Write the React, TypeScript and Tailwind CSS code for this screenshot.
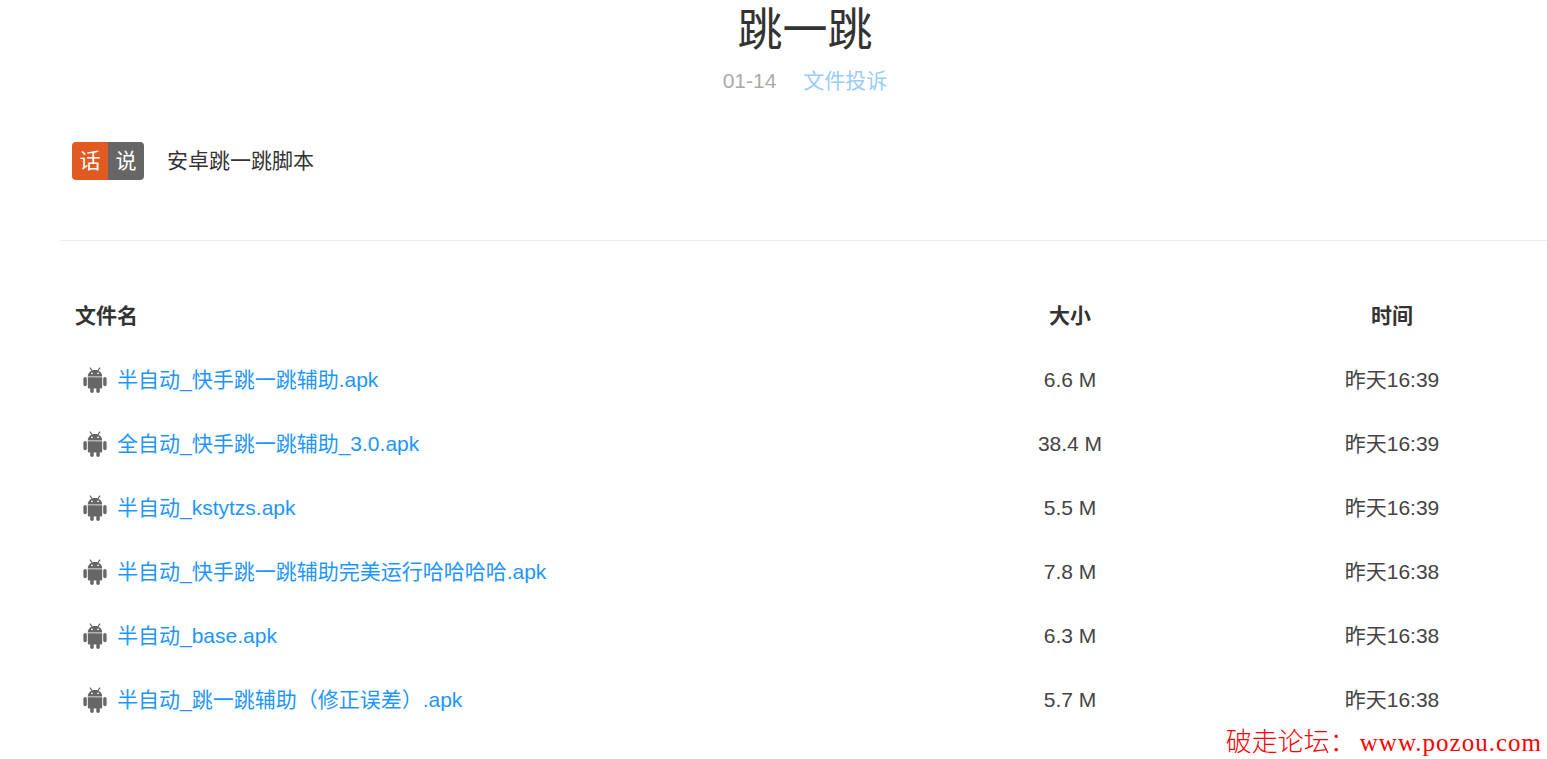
const files = [
  { name: "半自动_快手跳一跳辅助.apk", size: "6.6 M", time: "昨天16:39" },
  { name: "全自动_快手跳一跳辅助_3.0.apk", size: "38.4 M", time: "昨天16:39" },
  { name: "半自动_kstytzs.apk", size: "5.5 M", time: "昨天16:39" },
  { name: "半自动_快手跳一跳辅助完美运行哈哈哈哈.apk", size: "7.8 M", time: "昨天16:38" },
  { name: "半自动_base.apk", size: "6.3 M", time: "昨天16:38" },
  { name: "半自动_跳一跳辅助（修正误差）.apk", size: "5.7 M", time: "昨天16:38" },
];

function AndroidIcon() {
  return (
    <svg viewBox="0 0 24 26" className="h-[26px] w-[24px] shrink-0 fill-[#666666]">
      <path d="M7 .6l2.2 3.2M17 .6l-2.2 3.2" stroke="#666666" strokeWidth="1.2" fill="none" />
      <path d="M4.8 9.4C4.8 5.5 8 3 12 3s7.2 2.5 7.2 6.4z" />
      <circle cx="9" cy="6.4" r=".8" fill="#ffffff" />
      <circle cx="15" cy="6.4" r=".8" fill="#ffffff" />
      <path d="M4.8 10.2h14.4v10a1.3 1.3 0 0 1-1.3 1.3H6.1a1.3 1.3 0 0 1-1.3-1.3z" />
      <rect x="0.4" y="10" width="3.4" height="9.2" rx="1.7" />
      <rect x="20.2" y="10" width="3.4" height="9.2" rx="1.7" />
      <rect x="7.2" y="20" width="3.5" height="6" rx="1.7" />
      <rect x="13.3" y="20" width="3.5" height="6" rx="1.7" />
    </svg>
  );
}

export default function App() {
  return (
    <div className="relative h-[759px] overflow-hidden bg-white pl-[60px] font-['Liberation_Sans','Noto_Sans_CJK_SC',sans-serif] text-[21px] text-[#444]">
      <header className="flex flex-col items-center pl-[3px]">
        <h1 className="mt-[1px] h-[60px] text-[45px] leading-[60px] font-normal text-[#333]">跳一跳</h1>
        <div className="mt-[5px] flex h-[30px] items-center gap-[27px] leading-[30px]">
          <span className="text-[#aaa]">01-14</span>
          <a className="text-[#99ccff]">文件投诉</a>
        </div>
      </header>

      <section className="mt-[46px] flex items-center pl-[12px]">
        <div className="flex h-[38px] overflow-hidden rounded-[4px] text-white">
          <span className="flex w-[36px] items-center justify-center bg-[#e05a21]">话</span>
          <span className="flex w-[36px] items-center justify-center bg-[#666666]">说</span>
        </div>
        <p className="ml-[23px] text-[#333]">安卓跳一跳脚本</p>
      </section>

      <hr className="mt-[60px] border-t border-[#eeeeee]" />

      <div className="mt-[43px] grid grid-cols-[843px_334px_310px] items-center [grid-auto-rows:64px]">
        <div className="pl-[15px] font-bold text-[#333]">文件名</div>
        <div className="text-center font-bold text-[#333]">大小</div>
        <div className="text-center font-bold text-[#333]">时间</div>
        {files.map((f) => (
          <div key={f.name} className="contents">
            <div className="flex items-center pl-[23px]">
              <AndroidIcon />
              <a className="ml-[10px] text-[#1e96ff]">{f.name}</a>
            </div>
            <div className="text-center">{f.size}</div>
            <div className="text-center">{f.time}</div>
          </div>
        ))}
      </div>

      <div className="absolute right-[5px] bottom-[2px] font-['Liberation_Serif','Noto_Sans_CJK_SC',serif] text-[26px] leading-[28px] font-light whitespace-pre text-[#ff0000]">
        破走论坛：<span className="ml-[4px] text-[25px] tracking-[1px]">www.pozou.com</span>
      </div>
    </div>
  );
}
